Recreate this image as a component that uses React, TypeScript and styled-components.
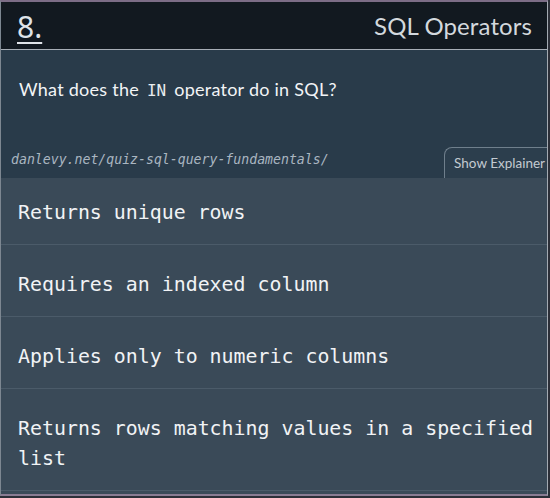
import React from "react";
import styled, { createGlobalStyle } from "styled-components";

const Global = createGlobalStyle`
  html, body { margin: 0; padding: 0; background: #2c2f38; }
  body { font-family: Lato, "Open Sans", sans-serif; }
`;

const Card = styled.div`
  width: 546px;
  border-top: 2px solid #7c6d86;
  border-left: 1px solid #7d8791;
  border-right: 1px solid #a3aab2;
  border-bottom: 2px solid #8a7c93;
  background: #3a4a58;
  overflow: hidden;
`;

const Header = styled.header`
  height: 47px;
  background: #121920;
  border-bottom: 1px solid #a7aeb6;
  display: flex;
  align-items: center;
  justify-content: space-between;
  padding: 0 15px 0 16px;
`;

const Number = styled.a`
  font-family: "Noto Sans", "Open Sans", sans-serif;
  font-size: 30px;
  line-height: 1;
  color: #dfe3e8;
  text-decoration: underline;
  text-decoration-thickness: 2px;
  text-underline-offset: 4px;
  padding-top: 2px;
`;

const Title = styled.h2`
  margin: 0;
  font-family: Lato, "Open Sans", sans-serif;
  font-weight: 400;
  font-size: 24px;
  color: #d3d8dd;
  letter-spacing: 0.1px;
`;

const QuestionSection = styled.section`
  background: #293b4a;
  padding-top: 27px;
`;

const Question = styled.p`
  margin: 0;
  padding: 0 18px;
  font-size: 18px;
  letter-spacing: 0.25px;
  line-height: 24px;
  color: #f2f4f6;
`;

const Code = styled.code`
  font-family: "DejaVu Sans Mono", monospace;
  font-size: 16px;
  letter-spacing: 0;
  padding: 0 8px;
  color: #e8ecef;
`;

const Footer = styled.div`
  margin-top: 45px;
  display: flex;
  justify-content: space-between;
  align-items: flex-start;
  height: 30px;
`;

const Url = styled.span`
  padding: 3px 0 0 10px;
  font-family: "DejaVu Sans Mono", monospace;
  font-style: italic;
  font-size: 13.2px;
  line-height: 18px;
  color: #aab6c1;
`;

const ExplainButton = styled.button`
  height: 31px;
  margin-top: -1px;
  box-sizing: border-box;
  background: #2c3e4d;
  border: 1px solid #6f7f8c;
  border-right: none;
  border-bottom: none;
  border-radius: 8px 0 0 0;
  padding: 0 2px 0 9px;
  font-family: Lato, "Open Sans", sans-serif;
  font-size: 13.5px;
  color: #c3cad1;
  white-space: nowrap;
`;

const Options = styled.ol`
  list-style: none;
  margin: 0;
  padding: 0;
`;

const Option = styled.li`
  padding: 25px 6px 16px 17px;
  border-bottom: 1px solid #4b5b69;
  font-family: "DejaVu Sans Mono", monospace;
  font-size: 19.9px;
  line-height: 30px;
  color: #f1f3f5;
  &:first-child {
    padding-top: 20px;
  }
  &:last-child {
    margin-bottom: 3px;
  }
`;

const options = [
  "Returns unique rows",
  "Requires an indexed column",
  "Applies only to numeric columns",
  "Returns rows matching values in a specified list",
];

export default function App() {
  return (
    <>
      <Global />
      <Card>
        <Header>
          <Number>8.</Number>
          <Title>SQL Operators</Title>
        </Header>
        <QuestionSection>
          <Question>
            What does the<Code>IN</Code>operator do in SQL?
          </Question>
          <Footer>
            <Url>danlevy.net/quiz-sql-query-fundamentals/</Url>
            <ExplainButton>Show Explainer</ExplainButton>
          </Footer>
        </QuestionSection>
        <Options>
          {options.map((o) => (
            <Option key={o}>{o}</Option>
          ))}
        </Options>
      </Card>
    </>
  );
}
